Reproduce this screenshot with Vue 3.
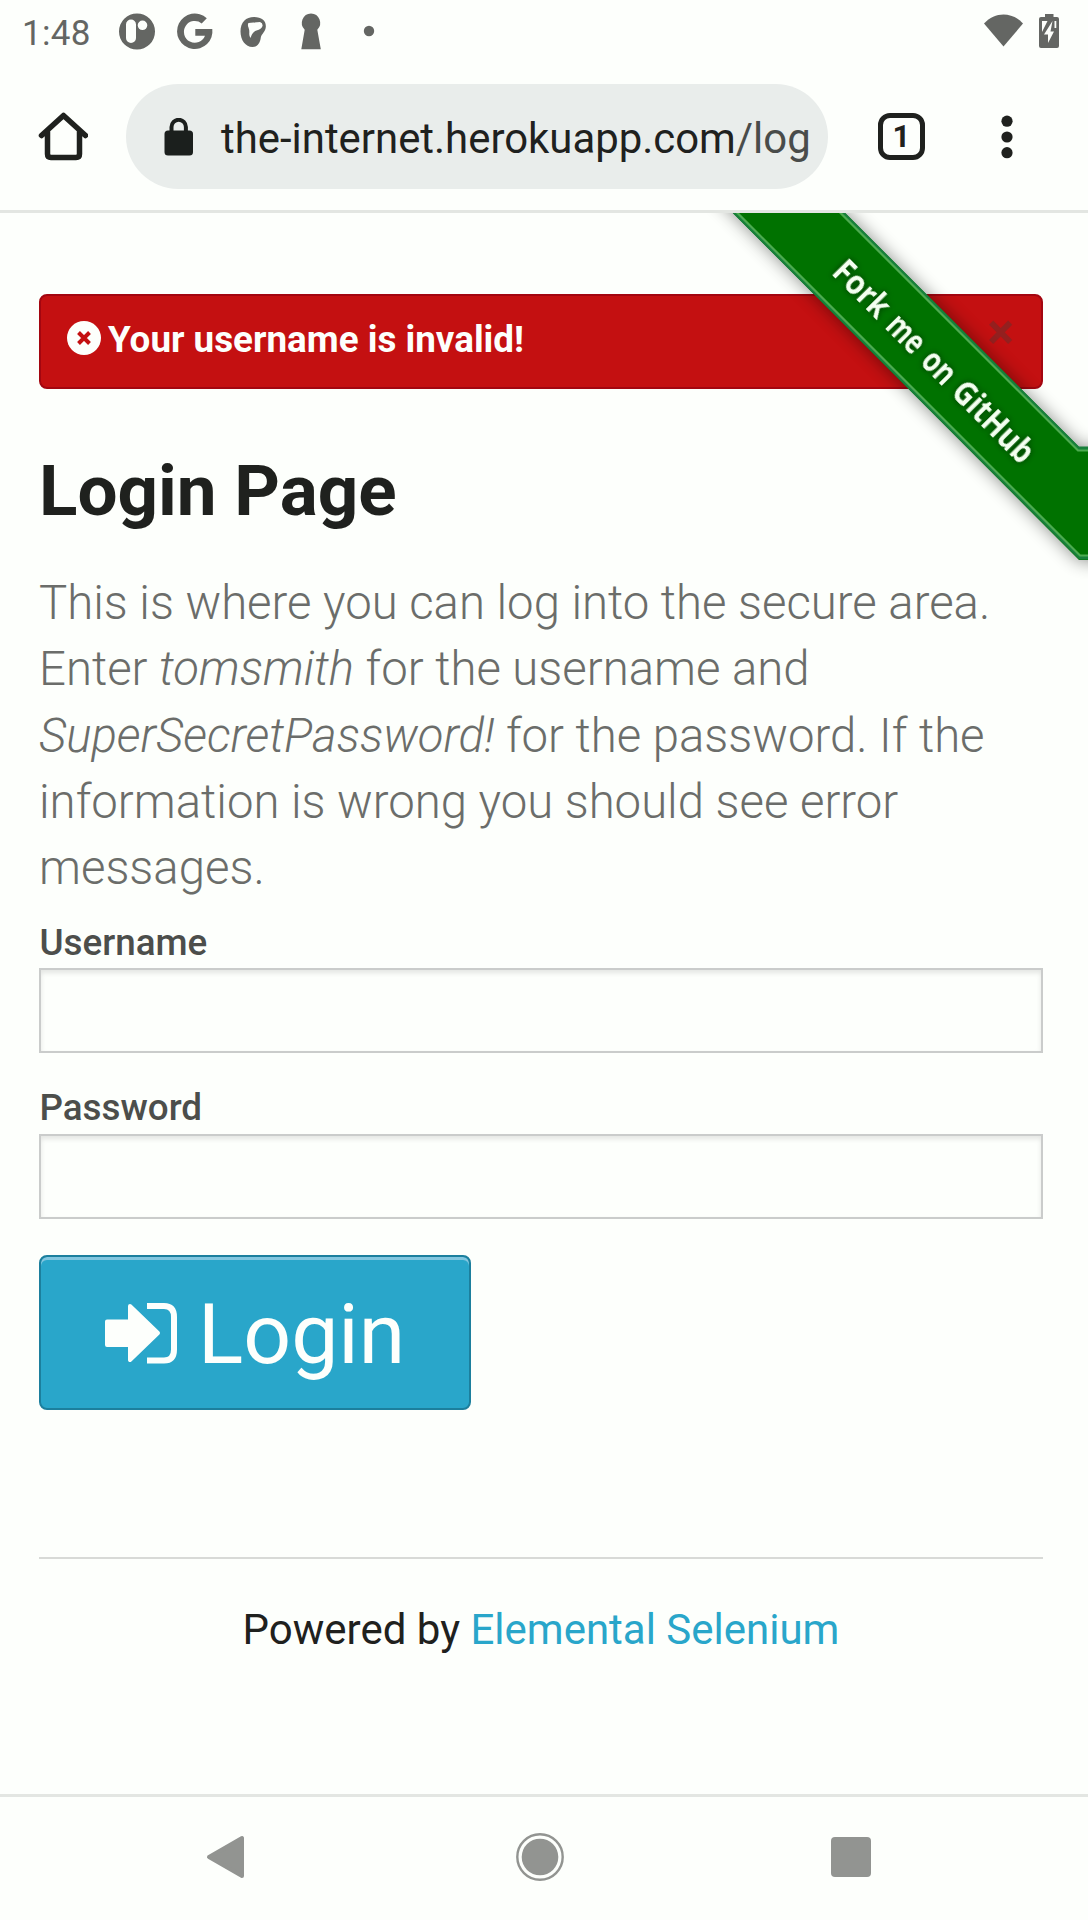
<script setup>
const tabCount = 1
const fields = [
  { id: 'username', label: 'Username', type: 'text' },
  { id: 'password', label: 'Password', type: 'password' }
]
const ribbonWords = [
  { text: 'Fork', x: -135, width: 66 },
  { text: 'me', x: -59, width: 40 },
  { text: 'on', x: -9, width: 34 },
  { text: 'GitHub', x: 34.5, width: 101 }
]
</script>

<template>
  <div class="screen">
    <header class="top">
      <div class="status">
        <span class="clock">1:48</span>
        <svg class="notifications" width="270" height="60" viewBox="110 0 270 60">
          <path fill-rule="evenodd" d="M137 13.500a18 18 0 1 1 0 36 18 18 0 0 1 0-36zM131 19.500a5 5 0 0 0-5 5v13.500a5 5 0 0 0 10 0v-13.500a5 5 0 0 0-5-5zM142.500 20.500a4.800 4.800 0 1 0 0 9.600 4.800 4.800 0 0 0 0-9.600z" />
          <path d="M206.800 18.300A17.700 17.700 0 1 0 212.300 29H195.300v6.700h9.700A10.900 10.900 0 1 1 201.700 23.400z" />
          <path fill-rule="evenodd" d="M254 17c8 0 12.300 4 11.800 10-.4 5-4.300 7-5 10.500-.6 5-3 9.500-8.300 9.500-7 0-12-7-12-15.500C240.500 22 246 17 254 17zM248.500 23L260 22q3 .8 2.500 4-1 3-6 4.500-4.500 1.500-6 7.500-1.500-1.500-1.200-5 .2-3-.8-5.500-1.200-3 0-4.500z" />
          <path d="M311 13.500a9.500 9.500 0 0 1 6.300 16.300L320.800 49.200H301.300L304.700 29.800A9.500 9.500 0 0 1 311 13.500z" />
          <circle cx="369" cy="31" r="5.200" />
        </svg>
        <svg class="system" width="80" height="60" viewBox="980 0 80 60">
          <path d="M984 23.500C995 11.500 1012 11.500 1023 23.500L1003.500 46.500z" />
          <path fill-rule="evenodd" d="M1045 14h8.500v3h3.500q2 0 2 2v27q0 2-2 2h-16q-2 0-2-2V19q0-2 2-2h4zM1042 21v11l5.500-11zM1052.500 21l-8.500 13.500h4v8.500l6-11.500h-3.500zM1054.500 21v7h1.800v-7z" />
        </svg>
      </div>
      <div class="toolbar">
        <svg class="home" width="50" height="50" viewBox="0 0 50 50">
          <path d="M3.500 23.500L25.500 3.500L47.500 23.500M9.500 19.500V42q0 3.500 3.500 3.500H38q3.500 0 3.500-3.500V19.500" />
        </svg>
        <div class="omnibox">
          <svg class="lock" width="30" height="38" viewBox="0 0 30 38">
            <rect x=".5" y="12.500" width="28.500" height="25" rx="3.500" />
            <path d="M7.500 14V9a7.200 7.200 0 0 1 14.400 0V14" />
          </svg>
          <span class="url">the-internet.herokuapp.com<span class="path">/log</span></span>
        </div>
        <div class="tabs">{{ tabCount }}</div>
        <svg class="menu" width="12" height="44" viewBox="0 0 12 44">
          <circle cx="6" cy="6.200" r="5.600" />
          <circle cx="6" cy="22" r="5.600" />
          <circle cx="6" cy="37.700" r="5.600" />
        </svg>
      </div>
    </header>

    <main class="page">
      <div class="alert">
        <svg class="error-icon" width="34" height="34" viewBox="0 0 34 34">
          <circle cx="17" cy="17" r="17" />
          <path d="M11.500 11.500L22.500 22.500M22.500 11.500L11.500 22.500" />
        </svg>
        <span class="message">Your username is invalid!</span>
        <span class="close">×</span>
      </div>

      <h2>Login Page</h2>
      <h4>
        This is where you can log into the secure area.<br />
        Enter <em>tomsmith</em> for the username and<br />
        <em>SuperSecretPassword!</em> for the password. If the<br />
        information is wrong you should see error<br />
        messages.
      </h4>

      <form @submit.prevent>
        <div v-for="field in fields" :key="field.id" class="field">
          <label :for="field.id">{{ field.label }}</label>
          <input :id="field.id" :type="field.type" />
        </div>
        <button type="submit">
          <svg width="73" height="62" viewBox="0 0 73 62">
            <path class="arrow" d="M2 19.500H25V4L53 31L25 58V43H2z" />
            <path class="bracket" d="M42 4H59Q69 4 69 15V47.500Q69 58.500 59 58.500H42" />
          </svg>
          <span>Login</span>
        </button>
      </form>

      <footer>
        <span class="powered">Powered by&nbsp;</span><a>Elemental Selenium</a>
      </footer>

      <svg class="ribbon" width="388" height="377" viewBox="700 213 388 377">
        <defs>
          <filter id="soft" x="-20%" y="-20%" width="140%" height="140%">
            <feGaussianBlur stdDeviation="9" />
          </filter>
        </defs>
        <path class="shade" filter="url(#soft)" d="M713 193L825 193L1080 448H1110V561H1080z" />
        <path class="band" d="M713 193L825 193L1079 447H1100V560H1079z" />
        <path class="edge" d="M822.500 193L1078 448.500H1100M715.500 193L1080 557.500H1100" />
        <path class="stitch" d="M820.500 193L1078 450.500H1100M717.500 193L1080 555.500H1100" />
        <g class="caption" transform="translate(934 361) rotate(45.300)">
          <text
            v-for="word in ribbonWords"
            :key="word.text"
            :x="word.x"
            y="12"
            :textLength="word.width"
            lengthAdjust="spacingAndGlyphs"
          >{{ word.text }}</text>
        </g>
      </svg>
    </main>

    <nav>
      <svg width="1088" height="123" viewBox="0 1797 1088 123">
        <path class="round" d="M242 1838V1876L209 1857z" />
        <circle cx="540" cy="1857" r="18.300" />
        <circle class="ring" cx="540" cy="1857" r="22.700" />
        <rect x="831" y="1837" width="40" height="40" rx="4" />
      </svg>
    </nav>
  </div>
</template>

<style>
body {
  margin: 0;
  background: #fdfffc;
}
</style>

<style scoped>
.screen {
  width: 1088px;
  height: 1920px;
  display: flex;
  flex-direction: column;
  overflow: hidden;
  background: #fdfffc;
  color: #1f211e;
  font-family: Roboto, sans-serif;
}
.screen * {
  box-sizing: border-box;
}
svg {
  display: block;
  flex: none;
}
.top {
  height: 213px;
  flex: none;
  border-bottom: 3px solid #e3e6e2;
}
.status {
  display: flex;
  height: 60px;
  padding-left: 22px;
  color: #646663;
  fill: #646663;
}
.clock {
  width: 88px;
  font-size: 35px;
  letter-spacing: 0.3px;
  line-height: 68px;
}
.system {
  margin-left: 600px;
}
.toolbar {
  display: flex;
  align-items: center;
  height: 153px;
  padding-left: 38px;
}
.home {
  margin-right: 38px;
  fill: none;
  stroke: #1f211e;
  stroke-width: 5.5;
  stroke-linecap: round;
  stroke-linejoin: round;
}
.omnibox {
  display: flex;
  align-items: center;
  width: 702px;
  height: 105px;
  padding: 0 19px 0 38px;
  border-radius: 53px;
  background: #e9edeb;
}
.lock {
  margin-right: 27px;
}
.lock rect {
  fill: #1b1f1d;
}
.lock path {
  fill: none;
  stroke: #1b1f1d;
  stroke-width: 4;
}
.url {
  white-space: nowrap;
  font-size: 41.9px;
  line-height: 60px;
  padding-top: 4px;
}
.path {
  color: #494c4a;
}
.tabs {
  width: 47px;
  height: 47px;
  margin: 0 75.5px 0 50px;
  border: 5px solid #1f211e;
  border-radius: 12px;
  text-align: center;
  font-size: 31px;
  font-weight: 700;
  line-height: 37px;
}
.menu {
  fill: #1f211e;
}
.page {
  position: relative;
  height: 1581px;
  flex: none;
  padding: 81px 45px 0 39px;
}
.alert {
  display: flex;
  width: 1004px;
  height: 95px;
  padding: 0 27px 0 26px;
  border: 2px solid #a30610;
  border-radius: 8px;
  background: #c41011;
  color: #fdfffc;
}
.error-icon {
  margin: 25px 7px 0 0;
  fill: #fdfffc;
}
.error-icon path {
  stroke: #c41011;
  stroke-width: 4;
}
.message {
  font-size: 36.8px;
  font-weight: 700;
  line-height: 88px;
}
.close {
  margin-left: auto;
  color: #93201f;
  font-size: 50px;
  font-weight: 700;
  line-height: 72px;
}
h2 {
  margin: 52px 0 0;
  font-size: 71px;
  font-weight: 700;
  line-height: 100px;
}
h4 {
  margin: 29px 0 0;
  color: #6b6d6a;
  font-size: 47.3px;
  font-weight: 300;
  line-height: 66.3px;
  white-space: nowrap;
}
form {
  padding-top: 15.700px;
}
.field {
  height: 165.500px;
}
.field:nth-child(2) label {
  line-height: 50px;
}
label {
  display: block;
  height: 51px;
  padding-left: 0.5px;
  color: #4c4e4b;
  font-size: 36.8px;
  font-weight: 500;
  line-height: 51px;
}
input {
  display: block;
  width: 1004px;
  height: 85px;
  padding: 0 20px;
  border: 2px solid #cacccb;
  border-radius: 0;
  outline: none;
  background: #fdfffc;
  box-shadow: inset 0 3px 5px rgba(0, 0, 0, 0.1);
  font: 36.8px Roboto, sans-serif;
}
button {
  display: flex;
  width: 432px;
  height: 155px;
  margin-top: 6.500px;
  padding: 0 0 0 64px;
  border: 2px solid #1c7f9d;
  border-radius: 8px;
  background: #29a6ca;
  box-shadow: inset 0 3px 0 #82c6df;
  color: #fdfffc;
  font-family: Roboto, sans-serif;
  font-size: 84px;
  font-weight: 400;
  line-height: 155px;
  text-align: left;
}
button svg {
  margin: 45px 20px 0 0;
}
.arrow {
  fill: #fdfffc;
  stroke: #fdfffc;
  stroke-width: 4;
  stroke-linejoin: round;
}
.bracket {
  fill: none;
  stroke: #fdfffc;
  stroke-width: 6;
}
footer {
  display: flex;
  justify-content: center;
  width: 1004px;
  margin-top: 147px;
  padding-top: 41px;
  border-top: 2px solid #d8dad7;
  font-size: 42px;
  line-height: 60px;
}
a {
  color: #29a6ca;
}
.ribbon {
  position: absolute;
  top: 0;
  right: 0;
}
.shade {
  opacity: 0.45;
}
.band {
  fill: #007200;
}
.edge {
  fill: none;
  stroke: #17803a;
  stroke-width: 4;
}
.stitch {
  fill: none;
  stroke: #4dab50;
  stroke-width: 2.2;
}
.caption {
  fill: #f4fff0;
  font-family: "Open Sans", sans-serif;
  font-size: 34px;
  font-weight: 700;
  filter: drop-shadow(0 0 3px rgba(0, 40, 0, 0.8));
}
nav {
  height: 126px;
  border-top: 3px solid #e3e6e2;
  fill: #929491;
}
.round {
  stroke: #929491;
  stroke-width: 4;
  stroke-linejoin: round;
}
.ring {
  fill: none;
  stroke: #929491;
  stroke-width: 2.4;
}
</style>
